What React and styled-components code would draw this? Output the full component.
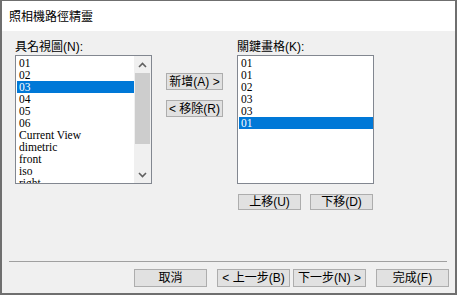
import styled, { createGlobalStyle } from "styled-components";

const GlobalStyle = createGlobalStyle`
  html, body {
    margin: 0;
    padding: 0;
    background: #f0f0f0;
  }
`;

const Window = styled.div`
  box-sizing: border-box;
  width: 457px;
  height: 295px;
  border: 2px solid #6f6f6f;
  border-top-width: 1px;
  background: #f0f0f0;
  display: flex;
  flex-direction: column;
  font-family: "Liberation Sans", "Noto Sans CJK TC", sans-serif;
  font-size: 12px;
  color: #000;
  overflow: hidden;
`;

const Header = styled.div`
  height: 30px;
  background: #fff;
  padding-left: 7px;
  line-height: 30px;
  font-size: 12px;
  font-family: "Noto Sans CJK TC", sans-serif;
`;

const Body = styled.div`
  flex: 1;
  display: flex;
  flex-direction: column;
`;

const Main = styled.div`
  display: flex;
  margin-top: 9px;
  padding-left: 13px;
  gap: 14px;
`;

const Column = styled.div`
  width: ${(p) => p.$width}px;
  display: flex;
  flex-direction: column;
  padding-top: ${(p) => p.$top || 0}px;
  gap: ${(p) => p.$gap || 0}px;
`;

const Label = styled.div`
  height: 15px;
  line-height: 15px;
  white-space: nowrap;
`;

const ListBox = styled.div`
  box-sizing: border-box;
  height: 129px;
  border: 1px solid #828790;
  background: #fff;
  display: flex;
  overflow: hidden;
`;

const Items = styled.div`
  flex: 1;
  padding: 1px 0 0 1px;
  overflow: hidden;
`;

const Item = styled.div`
  height: 12px;
  line-height: 12px;
  padding-left: 2px;
  font-family: "Liberation Serif", "Noto Sans CJK TC", serif;
  font-size: 11.5px;
  white-space: nowrap;
  overflow: hidden;
  background: ${(p) => (p.$selected ? "#0078d7" : "transparent")};
  color: ${(p) => (p.$selected ? "#fff" : "#000")};
`;

const ScrollBar = styled.div`
  width: 17px;
  background: #f0f0f0;
  display: flex;
  flex-direction: column;
  align-items: center;
`;

const Arrow = styled.div`
  height: 17px;
  width: 17px;
  display: flex;
  align-items: center;
  justify-content: center;
`;

const Track = styled.div`
  flex: 1;
  width: 15px;
`;

const Thumb = styled.div`
  height: 71px;
  background: #cdcdcd;
`;

const Button = styled.button`
  box-sizing: border-box;
  width: ${(p) => p.$width}px;
  height: ${(p) => p.$height}px;
  margin: 0;
  padding: 0;
  border: 1px solid #adadad;
  background: #e1e1e1;
  font-family: "Liberation Sans", "Noto Sans CJK TC", sans-serif;
  font-size: 12px;
  line-height: 1;
  color: #000;
  white-space: nowrap;
`;

const ButtonRow = styled.div`
  display: flex;
  gap: ${(p) => p.$gap}px;
  margin-top: ${(p) => p.$top || 0}px;
  padding-left: ${(p) => p.$left || 0}px;
`;

const Footer = styled.div`
  margin-top: auto;
  display: flex;
  flex-direction: column;
  padding-bottom: 6px;
`;

const Separator = styled.div`
  height: 1px;
  margin: 0 8px 0 7px;
  background: #a0a0a0;
`;

const FooterButtons = styled.div`
  display: flex;
  justify-content: flex-end;
  margin-top: 7px;
  padding-right: 6px;
  gap: 10px;
`;

const Pair = styled.div`
  display: flex;
  gap: 3px;
`;

const Chevron = ({ up }) => (
  <svg width="9" height="6" viewBox="0 0 9 6">
    <path
      d={up ? "M1 5 L4.5 1.5 L8 5" : "M1 1 L4.5 4.5 L8 1"}
      fill="none"
      stroke="#606060"
      strokeWidth="1.6"
    />
  </svg>
);

const named = ["01", "02", "03", "04", "05", "06", "Current View", "dimetric", "front", "iso", "right"];
const keys = ["01", "01", "02", "03", "03", "01"];

export default function App() {
  return (
    <>
      <GlobalStyle />
      <Window>
        <Header>照相機路徑精靈</Header>
        <Body>
          <Main>
            <Column $width={137}>
              <Label>具名視圖(N):</Label>
              <ListBox>
                <Items>
                  {named.map((n, i) => (
                    <Item key={i} $selected={i === 2}>{n}</Item>
                  ))}
                </Items>
                <ScrollBar>
                  <Arrow><Chevron up /></Arrow>
                  <Track>
                    <Thumb />
                  </Track>
                  <Arrow><Chevron /></Arrow>
                </ScrollBar>
              </ListBox>
            </Column>
            <Column $width={57} $top={33} $gap={10}>
              <Button $width={57} $height={17}>新增(A) &gt;</Button>
              <Button $width={57} $height={17}>&lt; 移除(R)</Button>
            </Column>
            <Column $width={137}>
              <Label>關鍵畫格(K):</Label>
              <ListBox>
                <Items>
                  {keys.map((n, i) => (
                    <Item key={i} $selected={i === 5}>{n}</Item>
                  ))}
                </Items>
              </ListBox>
              <ButtonRow $gap={9} $top={10} $left={1}>
                <Button $width={63} $height={16}>上移(U)</Button>
                <Button $width={63} $height={16}>下移(D)</Button>
              </ButtonRow>
            </Column>
          </Main>
          <Footer>
            <Separator />
            <FooterButtons>
              <Button $width={73} $height={18}>取消</Button>
              <Pair>
                <Button $width={73} $height={18}>&lt; 上一步(B)</Button>
                <Button $width={73} $height={18}>下一步(N) &gt;</Button>
              </Pair>
              <Button $width={73} $height={18}>完成(F)</Button>
            </FooterButtons>
          </Footer>
        </Body>
      </Window>
    </>
  );
}
